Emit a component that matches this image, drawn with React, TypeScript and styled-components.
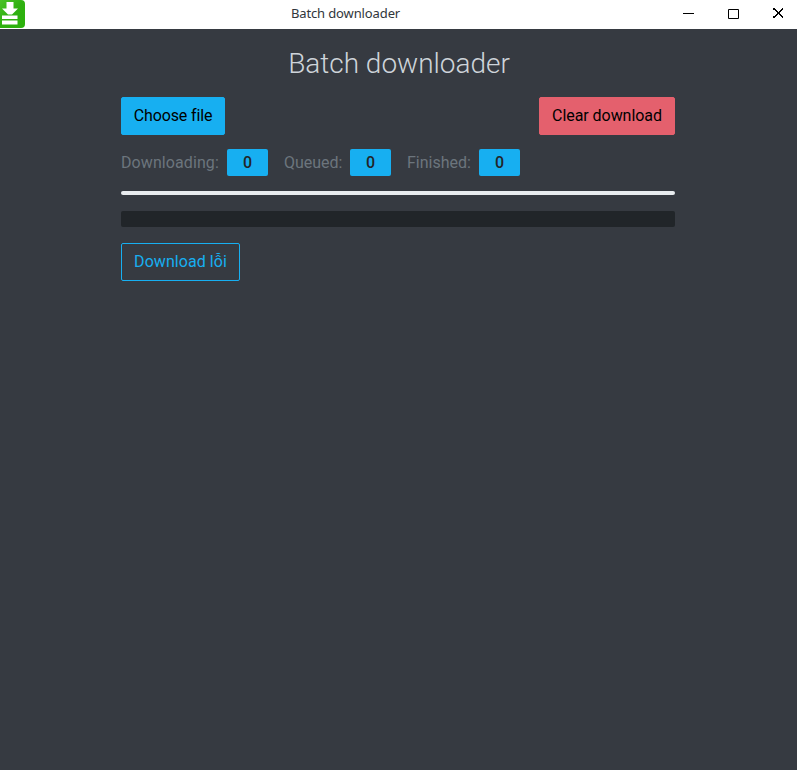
import React from "react";
import styled, { createGlobalStyle } from "styled-components";

const Global = createGlobalStyle`
  *, *::before, *::after { box-sizing: border-box; }
  body { margin: 0; background: #363a41; font-family: Roboto, sans-serif; font-size: 16px; line-height: 1.5; }
`;
const Window = styled.div`
  display: flex; flex-direction: column; height: 770px; overflow: hidden; background: #363a41;
`;
const TitleBar = styled.header`
  display: grid; grid-template-columns: 25px 641px 131px; align-items: center;
  height: 29px; flex: none; background: #fff; overflow: hidden;
`;
const AppIcon = styled.svg` display: block; width: 25px; height: 29px; `;
const WindowTitle = styled.div`
  font: 13px/27px "Noto Sans", sans-serif; letter-spacing: -0.12px; color: #31363b; text-align: center; height: 29px;
`;
const Controls = styled.div` display: flex; height: 29px; `;
const Control = styled.button`
  width: 45px; height: 29px; flex: none; padding: 0; border: 0; background: none;
  svg { display: block; }
`;
const Content = styled.main` width: 554px; margin: 0 0 0 121px; display: flex; flex-direction: column; `;
const Heading = styled.h1`
  margin: 17px 0 15px; padding-left: 2px; font-size: 28px; font-weight: 300; line-height: 36px; letter-spacing: -0.03px; color: #ced4da; text-align: center;
`;
const Actions = styled.div` display: flex; justify-content: space-between; `;
const Button = styled.button<{ $kind: "info" | "danger" | "outline" }>`
  width: ${p => ({ info: 104, danger: 136, outline: 119 })[p.$kind]}px;
  height: 38px; padding: 0; border-radius: 2px; font: 400 16px/24px Roboto, sans-serif; white-space: nowrap;
  letter-spacing: ${p => ({ info: "-0.13px", danger: "-0.06px", outline: "0.06px" })[p.$kind]};
  border: 1px solid ${p => (p.$kind === "danger" ? "#e4606d" : "#17aff1")};
  background: ${p => ({ info: "#17aff1", danger: "#e4606d", outline: "transparent" })[p.$kind]};
  color: ${p => (p.$kind === "outline" ? "#17aff1" : "#000")};
`;
const Stats = styled.div` display: flex; align-items: center; gap: 16px; margin-top: 14px; height: 27px; `;
const Stat = styled.div` display: flex; align-items: center; gap: 8px; color: #6c757d; `;
const Label = styled.span<{ $width: number; $tracking: number }>`
  width: ${p => p.$width}px; white-space: nowrap; letter-spacing: ${p => p.$tracking}px;
`;
const Badge = styled.span`
  width: 41px; height: 27px; border-radius: 2px; background: #17aff1; color: #212529; text-align: center; line-height: 27px; font-weight: 500;
`;
const Divider = styled.hr` width: 100%; height: 4px; margin: 15px 0 0; border: 0; border-radius: 2px; background: #e9ecef; `;
const Progress = styled.div` height: 16px; margin: 16px 0; border-radius: 2px; background: #212529; `;
const Footer = styled.div` display: flex; `;

const stats = [
  { label: "Downloading:", width: 98, tracking: 0.09, count: 0 },
  { label: "Queued:", width: 58, tracking: -0.04, count: 0 },
  { label: "Finished:", width: 64, tracking: 0, count: 0 },
];

export default function App() {
  return (
    <Window>
      <Global />
      <TitleBar>
        <AppIcon viewBox="0 0 25 29">
          <defs>
            <linearGradient id="green" x1="0" y1="0" x2="1" y2="1">
              <stop offset="0" stopColor="#4fc62c" />
              <stop offset="0.5" stopColor="#2fb010" />
              <stop offset="1" stopColor="#2bb20c" />
            </linearGradient>
          </defs>
          <rect x="-4" y="0" width="29" height="28" rx="4" fill="url(#green)" />
          <path d="M6.5 2h7v6.5h4.5l-6 6h-4l-6-6h4.5zM2 15.5h15.5v3.5h-15.5zM2 20.5h15.5v4h-15.5z" fill="#fff" />
        </AppIcon>
        <WindowTitle>Batch downloader</WindowTitle>
        <Controls>
          <Control aria-label="Minimize"><svg width="45" height="29"><path d="M17 13.5h11" stroke="#000" /></svg></Control>
          <Control aria-label="Maximize"><svg width="45" height="29"><path d="M17.5 9.5h10v9h-10z" stroke="#000" fill="none" /></svg></Control>
          <Control aria-label="Close"><svg width="45" height="29"><path d="M17.5 8.5l10 9m0-9l-10 9" stroke="#000" strokeWidth="1.5" shapeRendering="crispEdges" /></svg></Control>
        </Controls>
      </TitleBar>
      <Content>
        <Heading>Batch downloader</Heading>
        <Actions>
          <Button $kind="info">Choose file</Button>
          <Button $kind="danger">Clear download</Button>
        </Actions>
        <Stats>
          {stats.map(s => (
            <Stat key={s.label}>
              <Label $width={s.width} $tracking={s.tracking}>{s.label}</Label>
              <Badge>{s.count}</Badge>
            </Stat>
          ))}
        </Stats>
        <Divider />
        <Progress />
        <Footer><Button $kind="outline">Download lỗi</Button></Footer>
      </Content>
    </Window>
  );
}
